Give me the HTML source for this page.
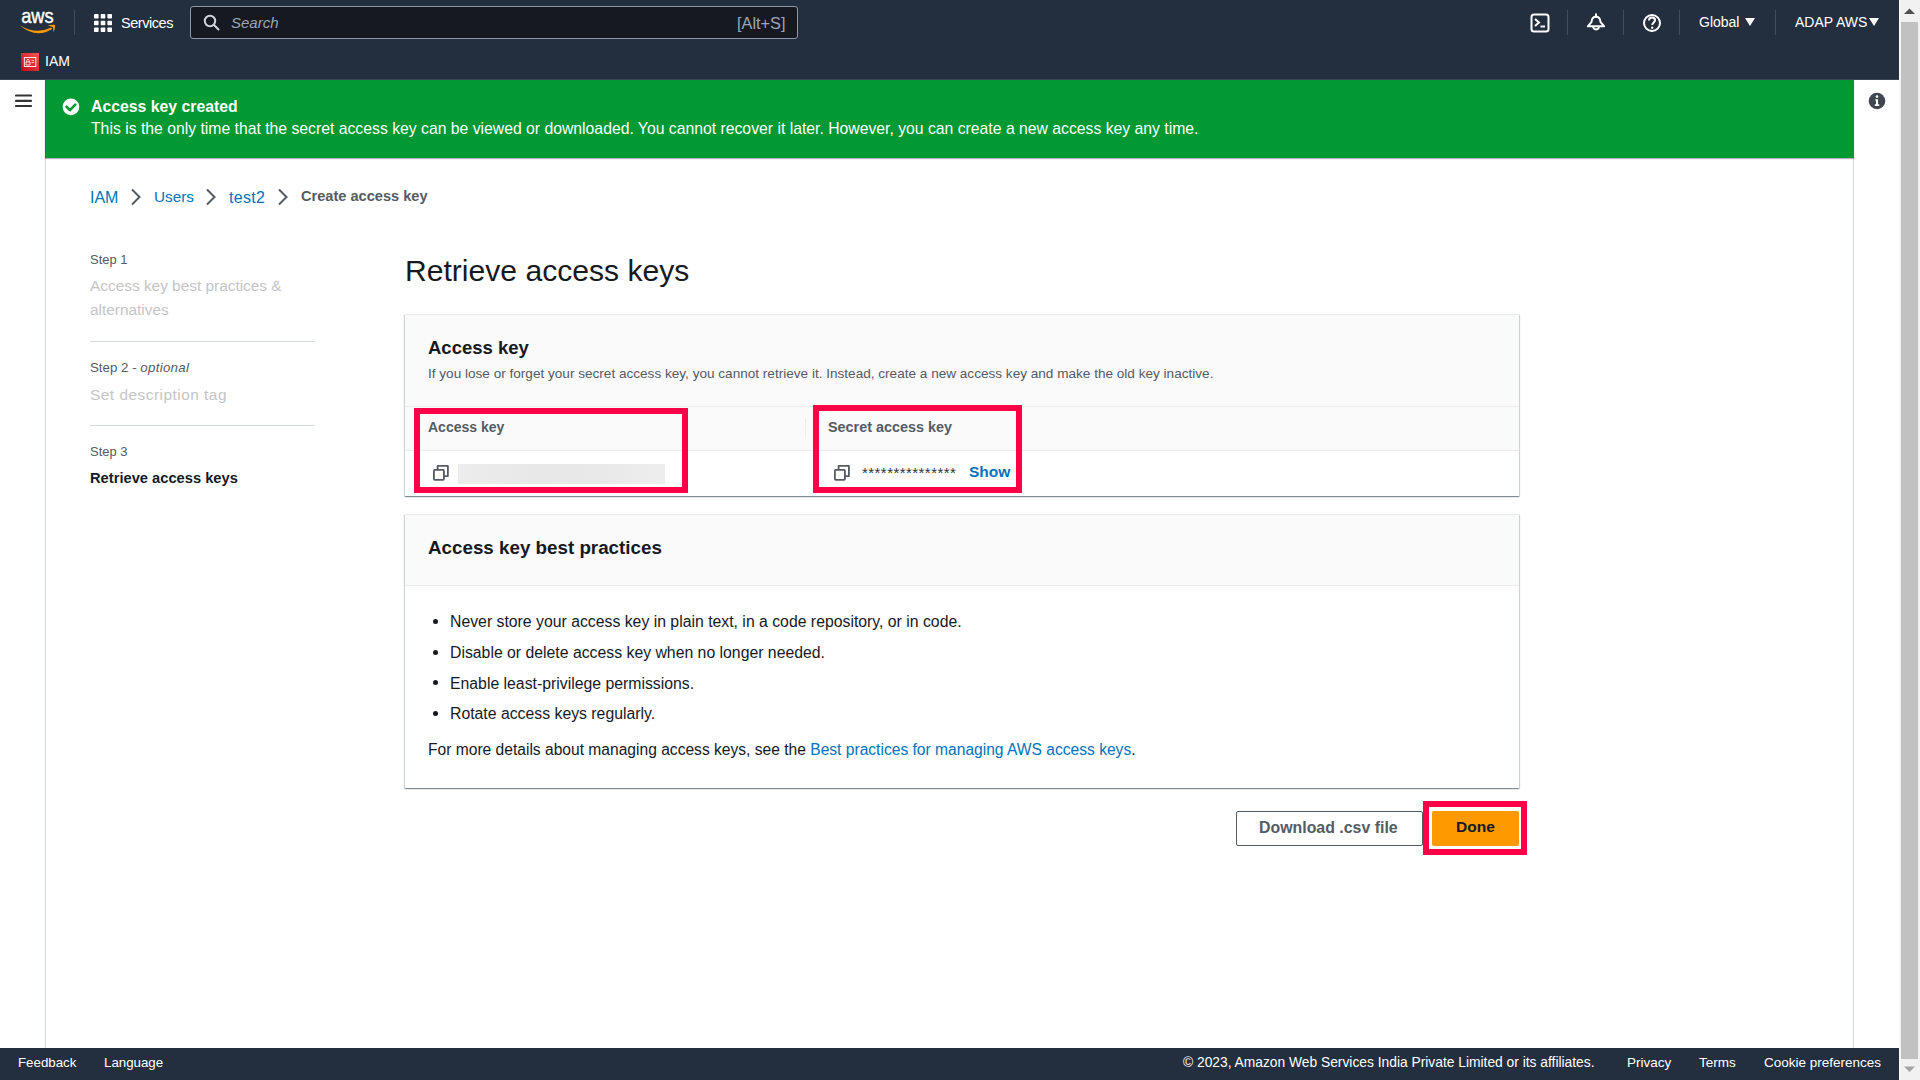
<!DOCTYPE html>
<html><head><meta charset="utf-8">
<style>
*{box-sizing:border-box;margin:0;padding:0}
html,body{width:1920px;height:1080px;overflow:hidden;background:#fff}
body{font-family:"Liberation Sans",sans-serif;position:relative;color:#16191f}
.a{position:absolute;white-space:nowrap;line-height:1}
#hdr{position:absolute;left:0;top:0;width:1899px;height:80px;background:#232f3e;border-bottom:1px solid #3c4452}
.vd{position:absolute;width:1px;background:#414d5c}
.wt{color:#fff}
#foot{position:absolute;left:0;top:1048px;width:1899px;height:32px;background:#232f3e}
#sb{position:absolute;left:1899px;top:0;width:21px;height:1080px;background:#f1f1f1;border-left:1px solid #fbfbfb}
#thumb{position:absolute;left:1901px;top:22px;width:17px;height:1037px;background:#c1c1c1}
.lnk{color:#0073bb}
.gry{color:#545b64}
</style></head>
<body>
<div id="hdr"></div>

<!-- aws logo -->
<svg class="a" style="left:18px;top:8px" width="40" height="28" viewBox="0 0 40 28">
  <text x="3.2" y="15" font-family="Liberation Sans" font-size="21" fill="#fff" stroke="#fff" stroke-width="0.45" textLength="32.5" lengthAdjust="spacingAndGlyphs">aws</text>
  <path d="M1.6,17.3 Q18,27 33.3,19.6 L34.2,21 Q18,31 1.6,17.3 Z" fill="#ff9900"/>
  <path d="M29.8,17.6 Q33.6,16.4 37.1,16.9 Q37.5,20.6 35.2,24.3 Q35.6,20.8 35,19.3 Q32.6,18.3 29.8,17.6 Z" fill="#ff9900"/>
</svg>
<div class="vd" style="left:74px;top:10px;height:25px"></div>

<!-- grid -->
<svg class="a" style="left:94px;top:14px" width="18" height="18" viewBox="0 0 18 18" fill="#fff">
  <rect x="0" y="0" width="4.6" height="4.6" rx="0.8"/><rect x="6.7" y="0" width="4.6" height="4.6" rx="0.8"/><rect x="13.4" y="0" width="4.6" height="4.6" rx="0.8"/>
  <rect x="0" y="6.7" width="4.6" height="4.6" rx="0.8"/><rect x="6.7" y="6.7" width="4.6" height="4.6" rx="0.8"/><rect x="13.4" y="6.7" width="4.6" height="4.6" rx="0.8"/>
  <rect x="0" y="13.4" width="4.6" height="4.6" rx="0.8"/><rect x="6.7" y="13.4" width="4.6" height="4.6" rx="0.8"/><rect x="13.4" y="13.4" width="4.6" height="4.6" rx="0.8"/>
</svg>
<div class="a wt" style="left:121px;top:15.5px;font-size:14.5px;letter-spacing:-0.45px">Services</div>

<!-- search -->
<div class="a" style="left:190px;top:6px;width:608px;height:33px;background:#16191f;border:1px solid #8d99a8;border-radius:3px"></div>
<svg class="a" style="left:203px;top:14px" width="17" height="17" viewBox="0 0 17 17">
  <circle cx="7" cy="7" r="5.2" stroke="#d1d5db" stroke-width="2" fill="none"/>
  <path d="M10.8,10.8 L15.5,15.5" stroke="#d1d5db" stroke-width="2" stroke-linecap="round"/>
</svg>
<div class="a" style="left:231px;top:15px;font-size:15px;font-style:italic;color:#9ba7b6">Search</div>
<div class="a" style="left:737px;top:14.5px;font-size:16.3px;color:#9ba7b6">[Alt+S]</div>

<!-- right icons -->
<svg class="a" style="left:1530px;top:13px" width="20" height="20" viewBox="0 0 20 20">
  <rect x="1.5" y="1.5" width="17" height="17" rx="2.5" stroke="#fff" stroke-width="2" fill="none"/>
  <path d="M5,6 L9,9.5 L5,13" stroke="#fff" stroke-width="2" fill="none"/>
  <path d="M10.5,13.5 L15,13.5" stroke="#fff" stroke-width="2"/>
</svg>
<div class="vd" style="left:1567px;top:10px;height:25px"></div>
<svg class="a" style="left:1586px;top:13px" width="20" height="20" viewBox="0 0 20 20">
  <path d="M10,3.8 C7.3,3.8 5.8,5.8 5.6,8.8 L1.8,13.3 L18.2,13.3 L14.4,8.8 C14.2,5.8 12.7,3.8 10,3.8 Z" stroke="#fff" stroke-width="1.9" fill="none" stroke-linejoin="round"/>
  <path d="M10,1.2 L10,3.8" stroke="#fff" stroke-width="2" stroke-linecap="round"/>
  <path d="M7.1,13.6 A2.9,2.9 0 0 0 12.9,13.6" stroke="#fff" stroke-width="1.9" fill="none"/>
</svg>
<div class="vd" style="left:1623px;top:10px;height:25px"></div>
<svg class="a" style="left:1642px;top:13px" width="20" height="20" viewBox="0 0 20 20">
  <circle cx="10" cy="10" r="8" stroke="#fff" stroke-width="2" fill="none"/>
  <path d="M7,7.5 C7,5.5 8.5,4.6 10,4.6 C11.7,4.6 13,5.7 13,7.3 C13,9.3 10.2,9.6 10.2,12" stroke="#fff" stroke-width="2" fill="none"/>
  <circle cx="10.2" cy="14.8" r="1.2" fill="#fff"/>
</svg>
<div class="vd" style="left:1679px;top:10px;height:25px"></div>
<div class="a wt" style="left:1699px;top:15px;font-size:14px">Global</div>
<svg class="a" style="left:1745px;top:18px" width="10" height="8" viewBox="0 0 10 8"><path d="M0,0 L10,0 L5,8Z" fill="#fff"/></svg>
<div class="vd" style="left:1775px;top:10px;height:25px"></div>
<div class="a wt" style="left:1795px;top:15px;font-size:14px">ADAP AWS</div>
<svg class="a" style="left:1869px;top:18px" width="10" height="8" viewBox="0 0 10 8"><path d="M0,0 L10,0 L5,8Z" fill="#fff"/></svg>

<!-- service bar -->
<svg class="a" style="left:21px;top:53px" width="18" height="18" viewBox="0 0 18 18">
  <defs><linearGradient id="rg" x1="0" y1="1" x2="1" y2="0"><stop offset="0" stop-color="#bd0816"/><stop offset="1" stop-color="#ff5252"/></linearGradient></defs>
  <rect width="18" height="18" fill="url(#rg)"/>
  <rect x="3.3" y="4.5" width="11.5" height="9" stroke="#fff" stroke-width="0.9" fill="none"/>
  <path d="M5,12 L5,9 L9,9 L9,12 Z M5.8,9 L5.8,7.5 A1.2,1.2 0 0 1 8.2,7.5 L8.2,9" stroke="#fff" stroke-width="0.8" fill="none"/>
  <path d="M10.5,7.5 L13,7.5 M10.5,9.5 L13,9.5" stroke="#fff" stroke-width="0.7"/>
</svg>
<div class="a wt" style="left:45px;top:54.3px;font-size:14px">IAM</div>

<!-- left column -->
<svg class="a" style="left:15px;top:94px" width="17" height="14" viewBox="0 0 17 14">
  <path d="M1,1.5 L16,1.5 M1,6.8 L16,6.8 M1,12 L16,12" stroke="#333" stroke-width="2.2" stroke-linecap="round"/>
</svg>
<div class="a" style="left:45px;top:158px;width:1px;height:890px;background:#d5dbdb"></div>
<div class="a" style="left:1853px;top:158px;width:1px;height:890px;background:#d5dbdb"></div>
<svg class="a" style="left:1868px;top:92px" width="18" height="18" viewBox="0 0 18 18">
  <circle cx="9" cy="9" r="8.3" fill="#414750"/>
  <circle cx="9" cy="4.6" r="1.3" fill="#fff"/>
  <path d="M7.2,7.2 L10,7.2 L10,12.3 L11.2,12.3 L11.2,14 L6.8,14 L6.8,12.3 L8,12.3 L8,8.6 L7.2,8.6 Z" fill="#fff"/>
</svg>

<!-- flash -->
<div class="a" style="left:45px;top:80px;width:1809px;height:78px;background:#009933;border-left:1px solid #008a22;box-shadow:0 1px 1px rgba(40,20,80,0.35)"></div>
<svg class="a" style="left:62px;top:98px" width="18" height="18" viewBox="0 0 18 18">
  <circle cx="8.95" cy="8.9" r="8.3" fill="#fff"/>
  <path d="M4.5,8.6 L7.9,12.2 L13.3,6.6" stroke="#009933" stroke-width="2.6" fill="none" stroke-linecap="round" stroke-linejoin="round"/>
</svg>
<div class="a wt" style="left:91px;top:99px;font-size:15.8px;font-weight:700">Access key created</div>
<div class="a wt" style="left:91px;top:121px;font-size:15.75px">This is the only time that the secret access key can be viewed or downloaded. You cannot recover it later. However, you can create a new access key any time.</div>

<!-- footer -->
<div id="foot"></div>
<div class="a wt" style="left:18px;top:1056px;font-size:13.3px">Feedback</div>
<div class="a wt" style="left:104px;top:1056px;font-size:13.3px">Language</div>
<div class="a wt" style="left:1183px;top:1056px;font-size:13.8px">© 2023, Amazon Web Services India Private Limited or its affiliates.</div>
<div class="a wt" style="left:1627px;top:1056px;font-size:13.5px">Privacy</div>
<div class="a wt" style="left:1699px;top:1056px;font-size:13.5px">Terms</div>
<div class="a wt" style="left:1764px;top:1056px;font-size:13.5px">Cookie preferences</div>

<!-- scrollbar -->
<div id="sb"></div>
<div id="thumb"></div>
<svg class="a" style="left:1904px;top:8px" width="11" height="7" viewBox="0 0 11 7"><path d="M0,6 L5.5,0.5 L11,6Z" fill="#505050"/></svg>
<svg class="a" style="left:1904px;top:1066px" width="11" height="7" viewBox="0 0 11 7"><path d="M0,0.5 L11,0.5 L5.5,6Z" fill="#a3a3a3"/></svg>


<!-- breadcrumbs -->
<div class="a lnk" style="left:90px;top:190px;font-size:16px">IAM</div>
<svg class="a" style="left:130px;top:188px" width="12" height="18" viewBox="0 0 12 18"><path d="M2,1.5 L9.5,9 L2,16.5" stroke="#545b64" stroke-width="2" fill="none"/></svg>
<div class="a lnk" style="left:154px;top:188.5px;font-size:15.3px">Users</div>
<svg class="a" style="left:205px;top:188px" width="12" height="18" viewBox="0 0 12 18"><path d="M2,1.5 L9.5,9 L2,16.5" stroke="#545b64" stroke-width="2" fill="none"/></svg>
<div class="a lnk" style="left:229px;top:190px;font-size:16px;letter-spacing:0.3px">test2</div>
<svg class="a" style="left:277px;top:188px" width="12" height="18" viewBox="0 0 12 18"><path d="M2,1.5 L9.5,9 L2,16.5" stroke="#545b64" stroke-width="2" fill="none"/></svg>
<div class="a gry" style="left:301px;top:189px;font-size:14.6px;font-weight:700">Create access key</div>

<!-- steps -->
<div class="a gry" style="left:90px;top:253px;font-size:13px">Step 1</div>
<div class="a" style="left:90px;top:274px;font-size:15.4px;line-height:24px;color:#c4c5c7;white-space:normal;width:225px">Access key best practices &amp; alternatives</div>
<div class="a" style="left:90px;top:341px;width:225px;height:1px;background:#d5dbdb"></div>
<div class="a gry" style="left:90px;top:361px;font-size:13.3px">Step 2 - <i style="letter-spacing:0.3px">optional</i></div>
<div class="a" style="left:90px;top:387px;font-size:15.4px;color:#c4c5c7;letter-spacing:0.5px">Set description tag</div>
<div class="a" style="left:90px;top:425px;width:225px;height:1px;background:#d5dbdb"></div>
<div class="a gry" style="left:90px;top:445px;font-size:13px">Step 3</div>
<div class="a" style="left:90px;top:471px;font-size:14.7px;font-weight:700;color:#16191f">Retrieve access keys</div>

<!-- title -->
<div class="a" style="left:405px;top:256px;font-size:30.1px;color:#16191f">Retrieve access keys</div>

<!-- container 1 -->
<div class="a" style="left:405px;top:314px;width:1114px;height:182px;background:#fff;border-top:1px solid #eaeded;box-shadow:0 1px 1px 0 rgba(0,28,36,.3),1px 1px 1px 0 rgba(0,28,36,.15),-1px 1px 1px 0 rgba(0,28,36,.15)"></div>
<div class="a" style="left:405px;top:315px;width:1114px;height:135px;background:#fafafa"></div>
<div class="a" style="left:405px;top:406px;width:1114px;height:1px;background:#eaeded"></div>
<div class="a" style="left:405px;top:450px;width:1114px;height:1px;background:#eaeded"></div>
<div class="a" style="left:428px;top:339px;font-size:18.5px;font-weight:700;color:#16191f">Access key</div>
<div class="a gry" style="left:428px;top:367px;font-size:13.58px">If you lose or forget your secret access key, you cannot retrieve it. Instead, create a new access key and make the old key inactive.</div>
<div class="a" style="left:428px;top:420px;font-size:14px;font-weight:700;color:#545b64">Access key</div>
<div class="a" style="left:805px;top:418px;width:1px;height:21px;background:#eaeded"></div>
<div class="a" style="left:828px;top:420px;font-size:14.4px;font-weight:700;color:#545b64">Secret access key</div>

<svg class="a" style="left:432px;top:464px" width="18" height="18" viewBox="0 0 18 18">
  <rect x="1.9" y="5.9" width="10" height="10" rx="0.8" stroke="#545b64" stroke-width="1.8" fill="none"/>
  <path d="M5.6,5.9 L5.6,1.9 L15.9,1.9 L15.9,12.1 L11.9,12.1" stroke="#545b64" stroke-width="1.8" fill="none" stroke-linejoin="round"/>
</svg>
<div class="a" style="left:458px;top:464px;width:207px;height:20px;background:linear-gradient(90deg,#ececec,#e8e8e8 40%,#e9e9e9 70%,#eeeeee)"></div>
<svg class="a" style="left:833px;top:464px" width="18" height="18" viewBox="0 0 18 18">
  <rect x="1.9" y="5.9" width="10" height="10" rx="0.8" stroke="#545b64" stroke-width="1.8" fill="none"/>
  <path d="M5.6,5.9 L5.6,1.9 L15.9,1.9 L15.9,12.1 L11.9,12.1" stroke="#545b64" stroke-width="1.8" fill="none" stroke-linejoin="round"/>
</svg>
<div class="a" style="left:862px;top:465px;font-size:15px;color:#2f3338;letter-spacing:0.45px">***************</div>
<div class="a lnk" style="left:969px;top:464px;font-size:15.5px;font-weight:700">Show</div>

<!-- red boxes -->
<div class="a" style="left:414px;top:408px;width:274px;height:85px;border:6px solid #ff0048"></div>
<div class="a" style="left:813px;top:405px;width:209px;height:88px;border:6px solid #ff0048"></div>

<!-- container 2 -->
<div class="a" style="left:405px;top:514px;width:1114px;height:274px;background:#fff;border-top:1px solid #eaeded;box-shadow:0 1px 1px 0 rgba(0,28,36,.3),1px 1px 1px 0 rgba(0,28,36,.15),-1px 1px 1px 0 rgba(0,28,36,.15)"></div>
<div class="a" style="left:405px;top:515px;width:1114px;height:71px;background:#fafafa;border-bottom:1px solid #eaeded"></div>
<div class="a" style="left:428px;top:539px;font-size:18.8px;font-weight:700;color:#16191f">Access key best practices</div>
<div class="a" style="left:433px;top:619px;width:5px;height:5px;border-radius:50%;background:#16191f"></div>
<div class="a" style="left:450px;top:614px;font-size:15.8px;color:#16191f">Never store your access key in plain text, in a code repository, or in code.</div>
<div class="a" style="left:433px;top:650px;width:5px;height:5px;border-radius:50%;background:#16191f"></div>
<div class="a" style="left:450px;top:645px;font-size:15.8px;color:#16191f">Disable or delete access key when no longer needed.</div>
<div class="a" style="left:433px;top:680px;width:5px;height:5px;border-radius:50%;background:#16191f"></div>
<div class="a" style="left:450px;top:675.5px;font-size:15.8px;color:#16191f">Enable least-privilege permissions.</div>
<div class="a" style="left:433px;top:711px;width:5px;height:5px;border-radius:50%;background:#16191f"></div>
<div class="a" style="left:450px;top:706px;font-size:15.8px;color:#16191f">Rotate access keys regularly.</div>
<div class="a" style="left:428px;top:742px;font-size:15.6px;color:#16191f">For more details about managing access keys, see the <span class="lnk">Best practices for managing AWS access keys</span>.</div>

<!-- buttons -->
<div class="a" style="left:1236px;top:811px;width:187px;height:35px;border:1.5px solid #545b64;border-radius:2px;background:#fff"></div>
<div class="a" style="left:1259px;top:820px;font-size:15.9px;font-weight:700;color:#545b64">Download .csv file</div>
<div class="a" style="left:1423px;top:801px;width:104px;height:54px;border:6.5px solid #ff0048"></div>
<div class="a" style="left:1432px;top:811px;width:87px;height:35px;background:#ff9900;border-radius:2px"></div>
<div class="a" style="left:1456px;top:819px;font-size:15.5px;font-weight:700;color:#16191f">Done</div>

</body></html>
